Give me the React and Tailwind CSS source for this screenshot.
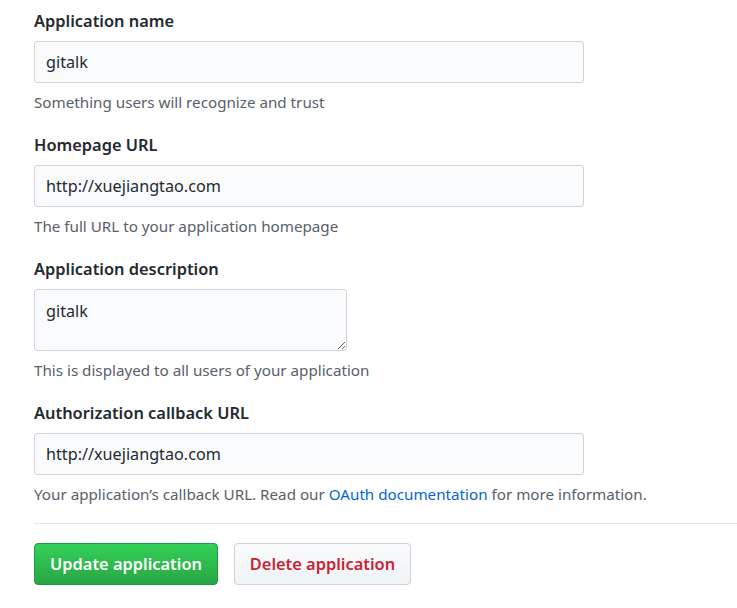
import React from "react";

const font = { fontFamily: '"Noto Sans", "Open Sans", sans-serif' };

function Field({ label, value, hint, area = false }) {
  return (
    <div className="flex flex-col">
      <label className="text-[16.4px] font-semibold text-[#24292e] leading-[22px] mt-[10px]">
        {label}
      </label>
      {area ? (
        <textarea
          defaultValue={value}
          className="mt-[9px] w-[313px] h-[62px] rounded-[3px] border border-[#d1d5da] bg-[#fafbfc] px-[11px] py-[10px] text-[16.2px] leading-[22px] text-[#24292e] outline-none resize-y"
          style={font}
        />
      ) : (
        <input
          defaultValue={value}
          className="mt-[9px] w-[550px] h-[42px] rounded-[3px] border border-[#d1d5da] bg-[#fafbfc] px-[11px] text-[16.2px] text-[#24292e] outline-none"
          style={font}
        />
      )}
      <p className="mt-[9px] text-[15.2px] leading-[20px] text-[#586069]">{hint}</p>
    </div>
  );
}

export default function App() {
  return (
    <div className="min-h-screen bg-white pl-[34px]" style={font}>
      <div className="flex flex-col gap-[12px]">
        <Field
          label="Application name"
          value="gitalk"
          hint="Something users will recognize and trust"
        />
        <Field
          label="Homepage URL"
          value="http://xuejiangtao.com"
          hint="The full URL to your application homepage"
        />
        <Field
          label="Application description"
          value="gitalk"
          area
          hint="This is displayed to all users of your application"
        />
        <Field
          label="Authorization callback URL"
          value="http://xuejiangtao.com"
          hint={
            <>
              Your application’s callback URL. Read our{" "}
              <a className="text-[#0366d6]" href="#">
                OAuth documentation
              </a>{" "}
              for more information.
            </>
          }
        />
      </div>
      <div className="mt-[19px] border-t border-[#e1e4e8]" />
      <div className="mt-[19px] flex gap-[16px]">
        <button className="h-[42px] w-[184px] rounded-[4px] border border-[#1f9a3d] bg-gradient-to-b from-[#34d058] to-[#28a745] text-[16.4px] font-semibold text-white">
          Update application
        </button>
        <button className="h-[42px] w-[177px] rounded-[4px] border border-[#cfd3d8] bg-gradient-to-b from-[#fafbfc] to-[#eff3f6] text-[16.4px] font-semibold text-[#cb2431]">
          Delete application
        </button>
      </div>
    </div>
  );
}
